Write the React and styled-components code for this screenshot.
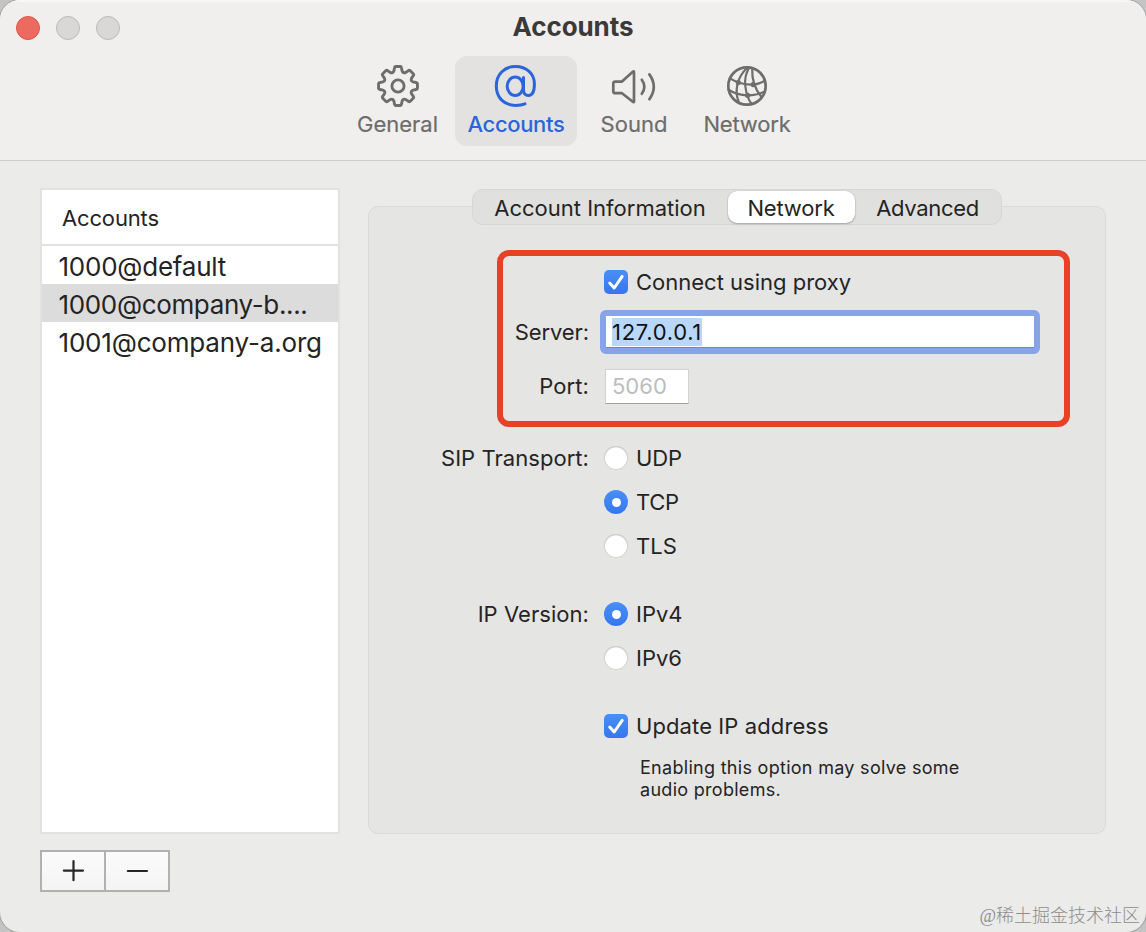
import React, { useState } from 'react';
import styled, { createGlobalStyle } from 'styled-components';

const GlobalStyle = createGlobalStyle`
  * {
    box-sizing: border-box;
  }
  body {
    margin: 0;
    background: #c4c4c4;
    font-family: Inter, "Noto Sans CJK SC", sans-serif;
    font-size: 22px;
    color: #242424;
  }
`;

const Window = styled.div`
  position: relative;
  width: 1146px;
  height: 932px;
  display: flex;
  flex-direction: column;
  background: #ebebe9;
  border-radius: 20px;
  overflow: hidden;
  box-shadow: 0 0 0 1px #a2a2a2;
`;

const TitleBar = styled.header`
  height: 161px;
  background: #f0efed;
  border-bottom: 1px solid #cbcbc9;
  box-shadow: inset 0 2px 0 #f8f7f5;
`;

const TitleRow = styled.div`
  display: grid;
  grid-template-columns: 1fr auto 1fr;
  align-items: center;
  height: 56px;
  padding: 0 16px;
`;

const Lights = styled.div`
  display: flex;
  gap: 16px;
`;

const Light = styled.span`
  width: 24px;
  height: 24px;
  border-radius: 50%;
  background: ${p => (p.$close ? '#ec6a5f' : '#d9d8d6')};
  border: 1px solid ${p => (p.$close ? '#d9564b' : '#bbbab8')};
`;

const Title = styled.h1`
  margin: 0 0 2px;
  font-size: 26px;
  line-height: 32px;
  font-weight: 700;
  letter-spacing: -0.1px;
  color: #3b3a39;
`;

const Toolbar = styled.nav`
  display: flex;
  justify-content: center;
  gap: 5px;
  padding-left: 2px;
`;

const ToolButton = styled.button`
  display: flex;
  flex-direction: column;
  align-items: center;
  width: ${p => p.$width}px;
  height: 90px;
  padding: 8px 0 0;
  border: 0;
  border-radius: 12px;
  background: ${p => (p.$active ? '#e3e2e0' : 'transparent')};
  color: ${p => (p.$active ? '#2a65dc' : '#6d6d6b')};
  font: inherit;
  font-weight: ${p => (p.$active ? 500 : 400)};
  letter-spacing: ${p => p.$tracking || 0}px;
  -webkit-text-stroke: ${p => (p.$active ? 0 : '0.2px')};
  line-height: 26px;

  svg {
    display: block;
    margin-bottom: 3px;
    fill: none;
    stroke: currentColor;
    stroke-linecap: round;
    stroke-linejoin: round;
  }
`;

const Body = styled.main`
  flex: 1;
  display: flex;
  gap: 28px;
  padding: 27px 40px 0;
`;

const Sidebar = styled.aside`
  width: 300px;
`;

const AccountList = styled.div`
  height: 646px;
  border: 2px solid #e2e2e0;
  background: #fff;
`;

const ListHeader = styled.div`
  height: 56px;
  padding-left: 20px;
  border-bottom: 2px solid #e2e2e1;
  line-height: 57px;
  letter-spacing: -0.15px;
`;

const ListItem = styled.div`
  height: 38px;
  padding-left: 16.5px;
  font-size: 26px;
  line-height: 42px;
  white-space: nowrap;
  letter-spacing: ${p => p.$tracking}px;
  background: ${p => (p.$selected ? '#dcdcdc' : 'transparent')};
`;

const ListActions = styled.div`
  display: flex;
  gap: 2px;
  width: 130px;
  height: 42px;
  margin-top: 16px;
  border: 2px solid #b1b1b1;
  background: #b1b1b1;
`;

const ListAction = styled.button`
  flex: 1;
  display: flex;
  align-items: center;
  justify-content: center;
  padding: 0;
  border: 0;
  background: linear-gradient(#fbfbfb, #f4f4f4);

  svg {
    stroke: #262626;
    stroke-width: 2.2;
    stroke-linecap: round;
  }
`;

const Panel = styled.section`
  display: flex;
  flex-direction: column;
  align-items: flex-start;
  width: 738px;
  height: 628px;
  margin-top: 18px;
  border: 1px solid #dadad8;
  border-radius: 10px;
  background: #e5e5e3;
`;

const Tabs = styled.div`
  display: flex;
  align-self: center;
  width: 530px;
  height: 36px;
  margin-top: -18px;
  padding: 1px 0;
  border: 1px solid #d7d7d5;
  border-radius: 11px;
  background: #e0e0de;
`;

const Tab = styled.button`
  width: ${p => p.$width}px;
  padding: 2px 1px 0 0;
  border: 0;
  border-radius: 9px;
  font: inherit;
  line-height: 30px;
  color: inherit;
  letter-spacing: ${p => p.$tracking}px;
  background: ${p => (p.$active ? '#fff' : 'transparent')};
  box-shadow: ${p => (p.$active ? '0 0 1px rgba(0, 0, 0, 0.25), 0 1px 2px rgba(0, 0, 0, 0.25)' : 'none')};
`;

const ProxyGroup = styled.div`
  width: 573px;
  height: 177px;
  margin: 25px 0 0 128px;
  padding-top: 8px;
  border: 6px solid #e84126;
  border-radius: 12px;
`;

const Row = styled.div`
  display: grid;
  grid-template-columns: ${p => p.$label || 220}px 1fr;
  column-gap: 15px;
  align-items: center;
  height: ${p => p.$height || 24}px;
  margin-top: ${p => p.$top || 0}px;
`;

const Label = styled.span`
  text-align: right;
  white-space: nowrap;
  line-height: 24px;
  letter-spacing: ${p => p.$tracking || 0}px;
`;

const Option = styled.label`
  display: flex;
  align-items: center;
  gap: 8px;
  line-height: 24px;
  letter-spacing: ${p => p.$tracking || 0}px;
`;

const CheckBox = styled.span`
  display: flex;
  width: 24px;
  height: 24px;
  border-radius: 5px;
  background: linear-gradient(#4a8ff7, #3576f0);
`;

const RadioMark = styled.span`
  display: flex;
  align-items: center;
  justify-content: center;
  width: 24px;
  height: 24px;
  border-radius: 50%;
  background: ${p => (p.$on ? 'linear-gradient(#4a8ff7, #3576f0)' : '#fff')};
  box-shadow: ${p => (p.$on ? 'none' : 'inset 0 0 0 1px #d0d0ce, inset 0 1px 1px #b5b5b3')};

  &::after {
    content: '';
    width: 9px;
    height: 9px;
    border-radius: 50%;
    background: #fff;
  }
`;

const FocusedField = styled.div`
  display: flex;
  align-items: center;
  width: 440px;
  height: 44px;
  margin-left: -4px;
  padding-left: 6px;
  border: 6px solid #87a4e8;
  border-radius: 6px;
  background: #fff;
  box-shadow: inset 0 -1px 0 #6688cc;
`;

const Selection = styled.span`
  height: 28px;
  padding-right: 0.5px;
  background: #b9d6fb;
  color: #111;
  line-height: 29px;
  letter-spacing: 0.7px;
`;

const PortField = styled.div`
  width: 84px;
  height: 35px;
  margin-left: 1px;
  padding-left: 6px;
  border: 1px solid #d2d2d0;
  border-bottom-color: #a3a3a1;
  background: #fff;
  color: #bdbdbd;
  line-height: 33px;
`;

const Hint = styled.p`
  margin: 19px 0 0 271px;
  font-size: 18px;
  line-height: 22px;
  letter-spacing: 0.29px;
`;

const Watermark = styled.div`
  position: absolute;
  right: 6px;
  bottom: 4px;
  font-family: "Liberation Serif", "Noto Sans CJK SC", serif;
  font-weight: 300;
  font-size: 18px;
  line-height: 24px;
  color: #8d8d8c;
`;

// outline of a gear with eight rounded teeth
const gearPath = () => {
  const at = (deg, r) => {
    const a = (deg * Math.PI) / 180;
    return `${(22 + r * Math.sin(a)).toFixed(2)} ${(22 - r * Math.cos(a)).toFixed(2)}`;
  };
  let d = '';
  for (let i = 0; i < 8; i++) {
    const t = i * 45;
    d += `${i ? 'L' : 'M'}${at(t - 11, 18.4)}Q${at(t - 10, 19.6)} ${at(t - 7, 19.6)}`;
    d += `L${at(t + 7, 19.6)}Q${at(t + 10, 19.6)} ${at(t + 11, 18.4)}`;
    d += `L${at(t + 15, 15.7)}Q${at(t + 22.5, 13.2)} ${at(t + 30, 15.7)}`;
  }
  return `${d}Z`;
};

const GearIcon = () => (
  <svg width="44" height="44" viewBox="0 0 44 44" strokeWidth="2.9">
    <path d={gearPath()} />
    <circle cx="22" cy="22" r="6.1" />
  </svg>
);

const AtIcon = () => (
  <svg width="44" height="44" viewBox="0 0 44 44" strokeWidth="3">
    <path d="M31 39.9C28.6 40.9 25.2 41.4 21.4 41.4C9.6 41.4 2.3 33.2 2.3 22C2.3 10.5 10.1 2.5 21.4 2.5C32.6 2.5 40.4 9.8 40.4 20C40.4 27.5 38.3 31.4 34.6 31.4C31.2 31.4 29.5 29.3 29.5 26V13.4" />
    <ellipse cx="21.2" cy="22.2" rx="8" ry="9.2" />
  </svg>
);

const SpeakerIcon = () => (
  <svg width="46" height="44" viewBox="0 0 46 44" strokeWidth="2.7">
    <path d="M4.3 17.6H11L21.8 7.8Q23 6.8 23 8.2V37.4Q23 38.8 21.8 37.8L11 29.2H4.3Q2.3 29.2 2.3 27.2V19.6Q2.3 17.6 4.3 17.6Z" />
    <path d="M30.8 15.8Q35.8 22.8 30.8 29.8" />
    <path d="M38.4 10.4Q47.2 22.8 38.4 35.2" />
  </svg>
);

const GlobeIcon = () => (
  <svg width="44" height="44" viewBox="0 0 44 44" strokeWidth="2.2">
    <circle cx="22" cy="22" r="18.7" strokeWidth="2.7" />
    <path d="M4.8 14.4Q16 21 27 20.6Q35 20.2 39.8 16.6" />
    <path d="M3.5 25.8Q12 31.2 22.7 31.4Q31.5 31.4 38.8 28" />
    <path d="M22 4Q14.5 11 12.4 20.5Q10.3 30 13.8 38" />
    <path d="M24 4Q19.2 12 20.3 22Q21.5 33 26.5 39.8" />
    <path d="M27.2 4.5Q26.5 21 36.4 33" />
    <g fill="currentColor" stroke="none">
      <circle cx="13.3" cy="18.6" r="2.6" />
      <circle cx="28.2" cy="20.6" r="2.6" />
      <circle cx="22.6" cy="31.3" r="2.6" />
    </g>
  </svg>
);

const sections = [
  { name: 'General', width: 105, icon: <GearIcon /> },
  { name: 'Accounts', width: 122, tracking: -0.35, icon: <AtIcon /> },
  { name: 'Sound', width: 104, icon: <SpeakerIcon /> },
  { name: 'Network', width: 112, tracking: -0.2, icon: <GlobeIcon /> },
];

const accounts = [
  { name: '1000@default', tracking: -0.23 },
  { name: '1000@company-b....', tracking: -0.35 },
  { name: '1001@company-a.org', tracking: -0.18 },
];

const tabs = [
  { name: 'Account Information', width: 255, tracking: 0 },
  { name: 'Network', width: 127, tracking: -0.2 },
  { name: 'Advanced', width: 146, tracking: -0.32 },
];

const Check = ({ checked }) => (
  <CheckBox>
    {checked && (
      <svg width="24" height="24" viewBox="0 0 24 24" fill="none" stroke="#fff" strokeWidth="3" strokeLinecap="round" strokeLinejoin="round">
        <path d="M5.7 13L10.2 18L18.2 6.4" />
      </svg>
    )}
  </CheckBox>
);

const Radio = ({ name, value, onPick, tracking }) => (
  <Option $tracking={tracking} onClick={() => onPick(name)}>
    <RadioMark $on={name === value} />
    {name}
  </Option>
);

const App = () => {
  const [section, setSection] = useState('Accounts');
  const [account, setAccount] = useState(1);
  const [tab, setTab] = useState('Network');
  const [proxy, setProxy] = useState(true);
  const [transport, setTransport] = useState('TCP');
  const [version, setVersion] = useState('IPv4');
  const [update, setUpdate] = useState(true);

  return (
    <Window>
      <GlobalStyle />
      <TitleBar>
        <TitleRow>
          <Lights>
            <Light $close />
            <Light />
            <Light />
          </Lights>
          <Title>Accounts</Title>
        </TitleRow>
        <Toolbar>
          {sections.map(s => (
            <ToolButton
              key={s.name}
              $width={s.width}
              $tracking={s.tracking}
              $active={s.name === section}
              onClick={() => setSection(s.name)}
            >
              {s.icon}
              {s.name}
            </ToolButton>
          ))}
        </Toolbar>
      </TitleBar>
      <Body>
        <Sidebar>
          <AccountList>
            <ListHeader>Accounts</ListHeader>
            {accounts.map((a, i) => (
              <ListItem key={a.name} $tracking={a.tracking} $selected={i === account} onClick={() => setAccount(i)}>
                {a.name}
              </ListItem>
            ))}
          </AccountList>
          <ListActions>
            <ListAction aria-label="Add">
              <svg width="24" height="24" viewBox="0 0 24 24">
                <path d="M2.8 11.6H22M12.5 2V21.2" />
              </svg>
            </ListAction>
            <ListAction aria-label="Remove">
              <svg width="24" height="24" viewBox="0 0 24 24">
                <path d="M2.8 12H22" />
              </svg>
            </ListAction>
          </ListActions>
        </Sidebar>
        <Panel>
          <Tabs>
            {tabs.map(t => (
              <Tab key={t.name} $width={t.width} $tracking={t.tracking} $active={t.name === tab} onClick={() => setTab(t.name)}>
                {t.name}
              </Tab>
            ))}
          </Tabs>
          <ProxyGroup>
            <Row $label={86} $height={36}>
              <span />
              <Option onClick={() => setProxy(!proxy)}>
                <Check checked={proxy} />
                Connect using proxy
              </Option>
            </Row>
            <Row $label={86} $height={44} $top={10}>
              <Label $tracking={-0.1}>Server:</Label>
              <FocusedField>
                <Selection>127.0.0.1</Selection>
              </FocusedField>
            </Row>
            <Row $label={86} $height={35} $top={15}>
              <Label as="div" $tracking={0.1}>
                <PortLabel>Port:</PortLabel>
              </Label>
              <PortField>5060</PortField>
            </Row>
          </ProxyGroup>
          <Row $top={19}>
            <Label $tracking={0.05}>SIP Transport:</Label>
            <Radio name="UDP" value={transport} onPick={setTransport} tracking={-0.12} />
          </Row>
          <Row $top={20}>
            <span />
            <Radio name="TCP" value={transport} onPick={setTransport} tracking={-0.3} />
          </Row>
          <Row $top={20}>
            <span />
            <Radio name="TLS" value={transport} onPick={setTransport} />
          </Row>
          <Row $top={44}>
            <Label $tracking={0.05}>IP Version:</Label>
            <Radio name="IPv4" value={version} onPick={setVersion} />
          </Row>
          <Row $top={20}>
            <span />
            <Radio name="IPv6" value={version} onPick={setVersion} />
          </Row>
          <Row $top={44}>
            <span />
            <Option $tracking={0.1} onClick={() => setUpdate(!update)}>
              <Check checked={update} />
              Update IP address
            </Option>
          </Row>
          <Hint>
            Enabling this option may solve some
            <br />
            audio problems.
          </Hint>
        </Panel>
      </Body>
      <Watermark>@稀土掘金技术社区</Watermark>
    </Window>
  );
};

const PortLabel = styled.div`
  padding-bottom: 1px;
`;

export default App;
